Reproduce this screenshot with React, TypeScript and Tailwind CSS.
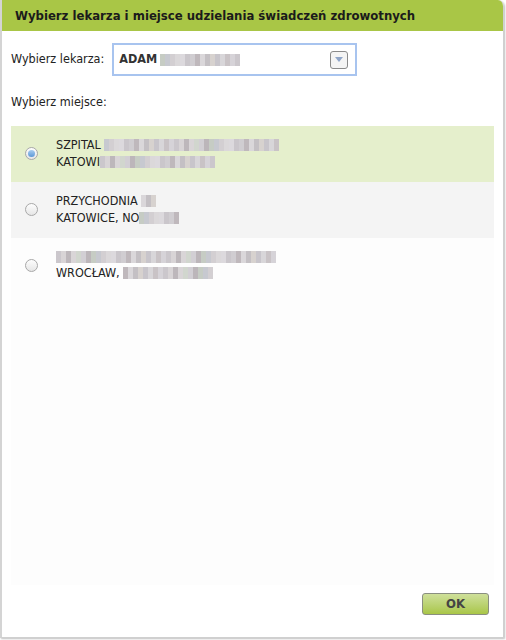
import React from 'react'

const palette = ['#d8d4d6', '#c9c3c6', '#d7d2cf', '#bfb8bc', '#dcd9dd', '#c7c9d0', '#d2cfd4', '#bdb7bb', '#d6d3d8', '#c8c5cb', '#dad7da', '#cac6cb', '#d3cfd2', '#bcb6ba', '#d9d5d7', '#cbc7cc', '#d8d6d9', '#c4c0c4', '#d0cdd1', '#dbd8da', '#c6ccc4', '#d1d6ce']

// pixelated "blurred" text placeholder
function Blur({ width, seed }: { width: number; seed: number }) {
  const n = Math.round(width / 5)
  return (
    <span className="inline-flex h-[12px] align-middle">
      {Array.from({ length: n }, (_, i) => (
        <span key={i} className="w-[5px] h-[12px]" style={{ backgroundColor: palette[(i * 7 + seed * 5) % palette.length] }} />
      ))}
    </span>
  )
}

const options = [
  { id: 1, first: 'SZPITAL ', firstBlur: 175, second: 'KATOWI', secondBlur: 115 },
  { id: 2, first: 'PRZYCHODNIA ', firstBlur: 15, second: 'KATOWICE, NO', secondBlur: 40 },
  { id: 3, first: '', firstBlur: 220, second: 'WROCŁAW, ', secondBlur: 90 },
]

export default function App() {
  const selected = 1
  return (
    <div className="w-[506px] h-[640px] bg-white" style={{ fontFamily: '"DejaVu Sans Condensed", "DejaVu Sans", Tahoma, sans-serif' }}>
      <div className="w-[504px] h-[638px] flex flex-col border-l-2 border-[#d4d4d4] rounded-tr-[6px] overflow-hidden shadow-[1px_1px_2px_rgba(0,0,0,0.25)] border-r border-b border-r-[#d0d0d0] border-b-[#d0d0d0]">
        {/* header */}
        <div className="h-[31px] bg-[#a9c646] flex items-center pl-[13px]">
          <h1 className="text-[13px] font-bold text-[#1b1b1b]">Wybierz lekarza i miejsce udzielania świadczeń zdrowotnych</h1>
        </div>

        <div className="flex-1 flex flex-col px-[9px] pt-[12px] pb-[22px]">
          {/* doctor select */}
          <div className="flex items-center gap-[8px]">
            <span className="text-[12.5px] text-[#222]">Wybierz lekarza:</span>
            <div className="w-[245px] h-[33px] border-2 border-[#a8c4ef] flex items-center pl-[5px] pr-[7px]">
              <span className="text-[12.5px] font-bold text-[#333]">ADAM</span>
              <span className="ml-[3px]">
                <Blur width={80} seed={4} />
              </span>
              <div className="ml-auto w-[18px] h-[18px] rounded-[3px] border border-[#8a8a8a] bg-[#f4f4f4] flex items-center justify-center">
                <svg width="8" height="5" viewBox="0 0 8 5">
                  <path d="M0 0 L8 0 L4 5 Z" fill="#8fa5c8" />
                </svg>
              </div>
            </div>
          </div>

          <div className="mt-[17px] text-[12.5px] text-[#222]">Wybierz miejsce:</div>

          {/* place list */}
          <div className="mt-[14px] flex-1 bg-[#fdfdfd] flex flex-col">
            {options.map((o, idx) => (
              <div
                key={o.id}
                className={
                  'h-[56px] flex items-center pl-[14px] ' +
                  (o.id === selected ? 'bg-[#e5efcc]' : idx === 1 ? 'bg-[#f4f4f4]' : 'bg-[#fdfdfd]')
                }
              >
                <span className="w-[13px] h-[13px] rounded-full border border-[#a8a8a8] bg-gradient-to-b from-[#fdfdfd] to-[#e6e6e6] flex items-center justify-center">
                  {o.id === selected && <span className="w-[7px] h-[7px] rounded-full bg-gradient-to-b from-[#a9cdf0] to-[#5b97d6]" />}
                </span>
                <div className="ml-[18px] flex flex-col gap-[3px] text-[12.5px] text-[#222] leading-[14px]">
                  <div className="flex items-center">
                    {o.first && <span className="whitespace-pre">{o.first}</span>}
                    <Blur width={o.firstBlur} seed={o.id} />
                  </div>
                  <div className="flex items-center">
                    <span className="whitespace-pre">{o.second}</span>
                    <Blur width={o.secondBlur} seed={o.id + 2} />
                  </div>
                </div>
              </div>
            ))}
          </div>

          {/* footer */}
          <div className="flex justify-end mt-[8px] pr-[5px]">
            <button className="w-[67px] h-[22px] rounded-[3px] border border-[#8a8f80] bg-gradient-to-b from-[#cfe09a] to-[#a9c646] text-[13px] font-bold text-[#444]">
              OK
            </button>
          </div>
        </div>
      </div>
    </div>
  )
}
